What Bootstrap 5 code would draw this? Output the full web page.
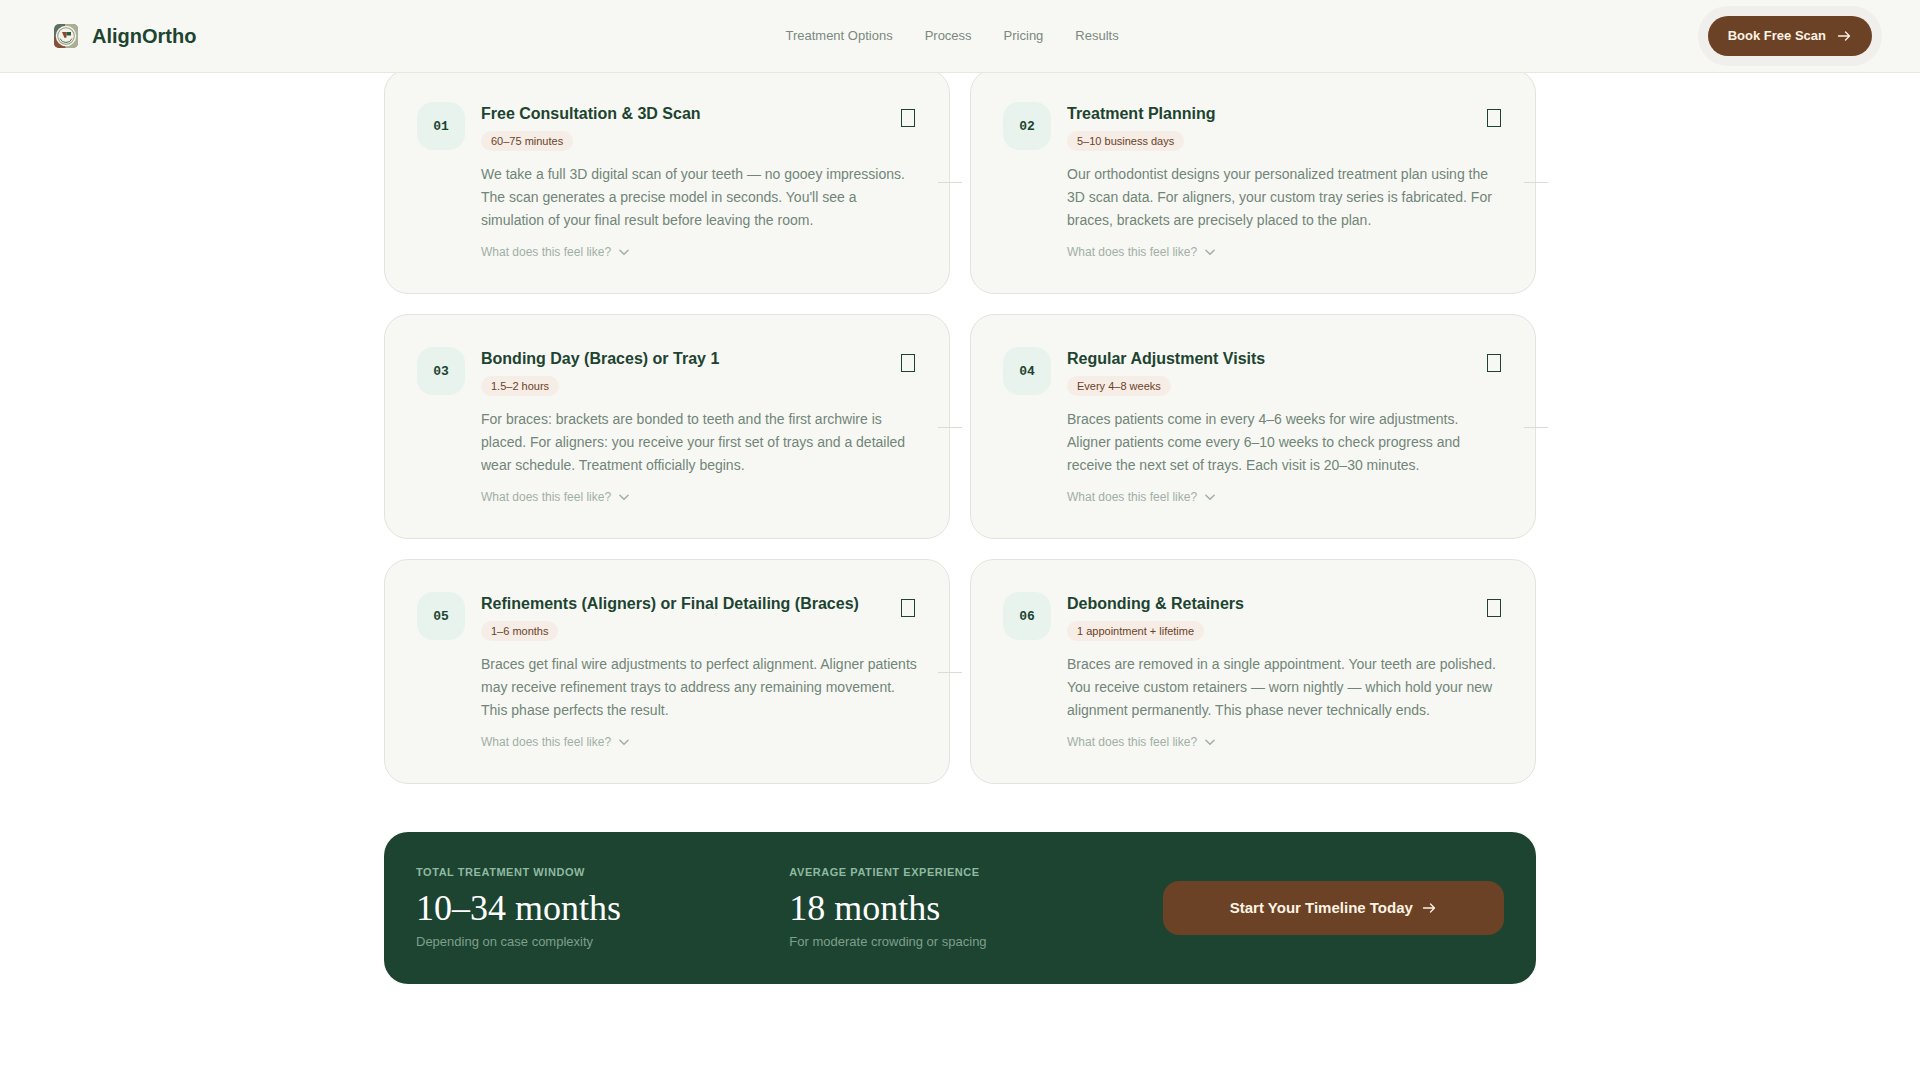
<!DOCTYPE html>
<html lang="en">
<head>
<meta charset="utf-8">
<meta name="viewport" content="width=device-width, initial-scale=1">
<title>AlignOrtho</title>
<link href="https://cdn.jsdelivr.net/npm/bootstrap@5.3.0/dist/css/bootstrap.min.css" rel="stylesheet">
<style>
:root { --forest:#1d4431; --cream:#f7f8f3; --brown:#6b4226; --muted:#718578; --soft:#a1afa6; }
body { font-family:"Liberation Sans", Arial, sans-serif; color:var(--forest); background:#fff; }
.site-bar { height:73px; padding:0 48px; background:var(--cream); border-bottom:1px solid #e6e8e3; }
.brand-box { padding-left:6px; gap:14px; font-size:20px; line-height:24px; color:var(--forest); }
.site-links { gap:32px; font-size:13px; }
.site-links a { color:#7a897f; }
.btn-scan { height:40px; padding:0 20px; gap:10px; font-size:13px; color:#fdf3e4; background:var(--brown); box-shadow:0 0 0 10px #f1efeb; }
.page-main { max-width:1200px; padding:69px 24px 96px; }
.step-row { --bs-gutter-x:20px; --bs-gutter-y:20px; }
.step-card { padding:32px; gap:16px; background:var(--cream); border:1px solid #e2e4dd; border-radius:24px; }
.step-num { width:48px; height:48px; border-radius:16px; background:#e8f3ee; font:bold 13px/50px "Liberation Mono", monospace; }
.step-title { font-size:16px; line-height:24px; margin-bottom:2px; }
.step-time { display:inline-block; padding:0 10px; font-size:11px; line-height:20px; border-radius:10px; background:#f6ede7; color:var(--brown); }
.step-text { font-size:14px; line-height:23px; color:var(--muted); margin:11px 0; }
.step-more { font-size:12px; line-height:18px; color:var(--soft); gap:6px; }
.glyph-box { width:14px; height:18px; border:1px solid var(--forest); margin:7px 2px 0 0; }
.step-link { width:24px; height:1px; right:-13px; top:50%; background:#d9dcd5; z-index:1; }
.sum-panel { margin-top:48px; padding:32px; border-radius:24px; background:var(--forest); }
.sum-row { --bs-gutter-x:32px; --bs-gutter-y:32px; }
.sum-label { font-size:11px; line-height:16px; letter-spacing:.05em; color:#8fb9a0; margin-bottom:6px; }
.sum-value { font-family:"Liberation Serif", serif; font-size:36px; line-height:44px; color:#fff; }
.sum-note { font-size:13px; line-height:20px; margin-top:2px; color:#7d9f8c; }
.btn-start { height:54px; gap:8px; border-radius:16px; font-size:15px; color:#fdf3e4; background:var(--brown); }
.btn-scan:hover, .btn-start:hover { color:#fff; background:#5c371f; }
</style>
<script src="https://cdn.jsdelivr.net/npm/bootstrap@5.3.0/dist/js/bootstrap.bundle.min.js"></script>
</head>
<body>
<svg class="d-none" aria-hidden="true">
  <symbol id="arrow" viewBox="0 0 16 16"><path d="M2.500 8h11M9.500 4l4 4-4 4" fill="none" stroke="currentColor" stroke-width="1.300" stroke-linecap="round" stroke-linejoin="round"/></symbol>
  <symbol id="chevron" viewBox="0 0 12 12"><path d="M2.500 4.500L6 8l3.500-3.500" fill="none" stroke="currentColor" stroke-width="1.300" stroke-linecap="round" stroke-linejoin="round"/></symbol>
</svg>

<header class="site-bar fixed-top d-flex align-items-center justify-content-between">
  <a href="#" class="brand-box d-flex align-items-center fw-bold text-decoration-none">
    <svg width="24" height="24" viewBox="0 0 24 24" aria-hidden="true">
      <defs><clipPath id="logoclip"><rect width="24" height="24" rx="5"/></clipPath></defs>
      <g clip-path="url(#logoclip)">
        <path fill="#5c7161" d="M0 0h24v24H0z"/>
        <path fill="#aab094" d="M11 0h13v24H11z"/>
        <path fill="#86513a" d="M0 12l12 12H0z"/>
        <circle cx="12" cy="12" r="9.500" fill="#8f9a86" stroke="#f4f1e8" stroke-width="1.500"/>
        <circle cx="12" cy="12" r="7.800" fill="#f4f1e8"/>
        <path d="M6 14.500a6.500 6.500 0 0 0 12 0" fill="none" stroke="#54705e" stroke-width="1"/>
        <path fill="#8a4b2c" d="M8 8h4.500v5.500l-2 .5z"/><path fill="#2c5a43" d="M12.500 8H17v3.500h-4.500z"/>
      </g>
    </svg>
    AlignOrtho
  </a>
  <nav class="site-links d-none d-md-flex" aria-label="Main">
    <a class="text-decoration-none" href="#">Treatment Options</a>
    <a class="text-decoration-none" href="#">Process</a>
    <a class="text-decoration-none" href="#">Pricing</a>
    <a class="text-decoration-none" href="#">Results</a>
  </nav>
  <button type="button" class="btn btn-scan rounded-pill border-0 fw-bold d-flex align-items-center">Book Free Scan
    <svg width="16" height="16" aria-hidden="true"><use href="#arrow"/></svg></button>
</header>

<main class="page-main container-fluid">
  <div class="row row-cols-1 row-cols-lg-2 step-row">
    <div class="col">
      <article class="step-card position-relative d-flex h-100">
        <div class="step-num flex-shrink-0 text-center">01</div>
        <div class="flex-grow-1">
          <div class="d-flex justify-content-between"><div><h3 class="step-title fw-bold">Free Consultation &amp; 3D Scan</h3><span class="step-time">60–75 minutes</span></div><span class="glyph-box flex-shrink-0"></span></div>
          <p class="step-text">We take a full 3D digital scan of your teeth — no gooey impressions. The scan generates a precise model in seconds. You'll see a simulation of your final result before leaving the room.</p>
          <button type="button" class="step-more btn p-0 border-0 d-flex align-items-center">What does this feel like? <svg width="14" height="14" aria-hidden="true"><use href="#chevron"/></svg></button>
        </div>
        <span class="step-link position-absolute"></span>
      </article>
    </div>
    <div class="col">
      <article class="step-card position-relative d-flex h-100">
        <div class="step-num flex-shrink-0 text-center">02</div>
        <div class="flex-grow-1">
          <div class="d-flex justify-content-between"><div><h3 class="step-title fw-bold">Treatment Planning</h3><span class="step-time">5–10 business days</span></div><span class="glyph-box flex-shrink-0"></span></div>
          <p class="step-text">Our orthodontist designs your personalized treatment plan using the 3D scan data. For aligners, your custom tray series is fabricated. For braces, brackets are precisely placed to the plan.</p>
          <button type="button" class="step-more btn p-0 border-0 d-flex align-items-center">What does this feel like? <svg width="14" height="14" aria-hidden="true"><use href="#chevron"/></svg></button>
        </div>
        <span class="step-link position-absolute"></span>
      </article>
    </div>
    <div class="col">
      <article class="step-card position-relative d-flex h-100">
        <div class="step-num flex-shrink-0 text-center">03</div>
        <div class="flex-grow-1">
          <div class="d-flex justify-content-between"><div><h3 class="step-title fw-bold">Bonding Day (Braces) or Tray 1</h3><span class="step-time">1.5–2 hours</span></div><span class="glyph-box flex-shrink-0"></span></div>
          <p class="step-text">For braces: brackets are bonded to teeth and the first archwire is placed. For aligners: you receive your first set of trays and a detailed wear schedule. Treatment officially begins.</p>
          <button type="button" class="step-more btn p-0 border-0 d-flex align-items-center">What does this feel like? <svg width="14" height="14" aria-hidden="true"><use href="#chevron"/></svg></button>
        </div>
        <span class="step-link position-absolute"></span>
      </article>
    </div>
    <div class="col">
      <article class="step-card position-relative d-flex h-100">
        <div class="step-num flex-shrink-0 text-center">04</div>
        <div class="flex-grow-1">
          <div class="d-flex justify-content-between"><div><h3 class="step-title fw-bold">Regular Adjustment Visits</h3><span class="step-time">Every 4–8 weeks</span></div><span class="glyph-box flex-shrink-0"></span></div>
          <p class="step-text">Braces patients come in every 4–6 weeks for wire adjustments. Aligner patients come every 6–10 weeks to check progress and receive the next set of trays. Each visit is 20–30 minutes.</p>
          <button type="button" class="step-more btn p-0 border-0 d-flex align-items-center">What does this feel like? <svg width="14" height="14" aria-hidden="true"><use href="#chevron"/></svg></button>
        </div>
        <span class="step-link position-absolute"></span>
      </article>
    </div>
    <div class="col">
      <article class="step-card position-relative d-flex h-100">
        <div class="step-num flex-shrink-0 text-center">05</div>
        <div class="flex-grow-1">
          <div class="d-flex justify-content-between"><div><h3 class="step-title fw-bold">Refinements (Aligners) or Final Detailing (Braces)</h3><span class="step-time">1–6 months</span></div><span class="glyph-box flex-shrink-0"></span></div>
          <p class="step-text">Braces get final wire adjustments to perfect alignment. Aligner patients may receive refinement trays to address any remaining movement. This phase perfects the result.</p>
          <button type="button" class="step-more btn p-0 border-0 d-flex align-items-center">What does this feel like? <svg width="14" height="14" aria-hidden="true"><use href="#chevron"/></svg></button>
        </div>
        <span class="step-link position-absolute"></span>
      </article>
    </div>
    <div class="col">
      <article class="step-card position-relative d-flex h-100">
        <div class="step-num flex-shrink-0 text-center">06</div>
        <div class="flex-grow-1">
          <div class="d-flex justify-content-between"><div><h3 class="step-title fw-bold">Debonding &amp; Retainers</h3><span class="step-time">1 appointment + lifetime</span></div><span class="glyph-box flex-shrink-0"></span></div>
          <p class="step-text">Braces are removed in a single appointment. Your teeth are polished. You receive custom retainers — worn nightly — which hold your new alignment permanently. This phase never technically ends.</p>
          <button type="button" class="step-more btn p-0 border-0 d-flex align-items-center">What does this feel like? <svg width="14" height="14" aria-hidden="true"><use href="#chevron"/></svg></button>
        </div>
      </article>
    </div>
  </div>

  <section class="sum-panel">
    <div class="row row-cols-1 row-cols-md-3 align-items-center sum-row">
      <div class="col"><div class="sum-label fw-bold text-uppercase">Total Treatment Window</div><div class="sum-value">10–34 months</div><div class="sum-note">Depending on case complexity</div></div>
      <div class="col"><div class="sum-label fw-bold text-uppercase">Average Patient Experience</div><div class="sum-value">18 months</div><div class="sum-note">For moderate crowding or spacing</div></div>
      <div class="col"><button type="button" class="btn btn-start w-100 border-0 fw-bold d-flex align-items-center justify-content-center">Start Your Timeline Today <svg width="16" height="16" aria-hidden="true"><use href="#arrow"/></svg></button></div>
    </div>
  </section>
</main>
</body>
</html>
